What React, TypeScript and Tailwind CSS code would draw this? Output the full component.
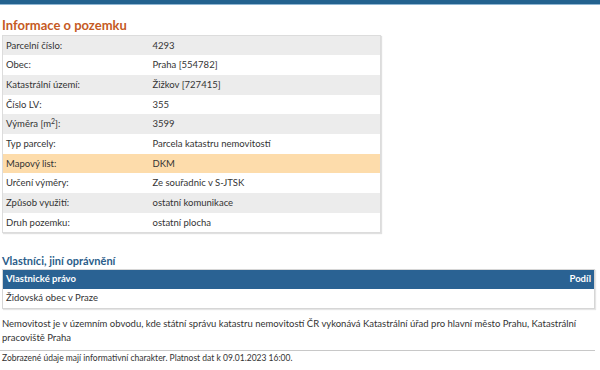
const rows: { label: React.ReactNode; value: string; hl?: boolean }[] = [
  { label: 'Parcelní číslo:', value: '4293' },
  { label: 'Obec:', value: 'Praha [554782]' },
  { label: 'Katastrální území:', value: 'Žižkov [727415]' },
  { label: 'Číslo LV:', value: '355' },
  {
    label: (
      <>
        Výměra [m<sup className="text-[7px]">2</sup>]:
      </>
    ),
    value: '3599',
  },
  { label: 'Typ parcely:', value: 'Parcela katastru nemovitostí' },
  { label: 'Mapový list:', value: 'DKM', hl: true },
  { label: 'Určení výměry:', value: 'Ze souřadnic v S-JTSK' },
  { label: 'Způsob využití:', value: 'ostatní komunikace' },
  { label: 'Druh pozemku:', value: 'ostatní plocha' },
];

export default function App() {
  return (
    <div className="w-[600px] h-[370px] bg-white text-[9.5px] text-[#333] font-['Lato',sans-serif] overflow-hidden">
      {/* top bar */}
      <div className="h-[5px] bg-[#23628f] border-b border-[#8fb6d3]" />

      <div className="px-[2px]">
        <h2 className="mt-[10px] text-[13px] leading-[20px] font-bold text-[#c55a24]">Informace o pozemku</h2>

        <table className="w-[379px] border border-[#dcdcdc] shadow-[1px_1px_1px_rgba(0,0,0,0.12)] border-collapse">
          <tbody>
            {rows.map((r, i) => (
              <tr
                key={i}
                className={r.hl ? 'bg-[#fddcab]' : i % 2 === 0 ? 'bg-[#ececec]' : 'bg-white'}
              >
                <td className="h-[19.7px] pl-[3px] w-[150px] leading-none">{r.label}</td>
                <td className="leading-none">{r.value}</td>
              </tr>
            ))}
          </tbody>
        </table>

        <h3 className="mt-[20px] text-[11px] leading-[16px] font-bold text-[#2a5d8a]">Vlastníci, jiní oprávnění</h3>

        <div className="w-[593px] border border-[#d6d6d6] shadow-[1px_1px_1px_rgba(0,0,0,0.1)]">
          <div className="h-[19px] bg-[#2a6293] text-white font-bold flex items-center justify-between px-[3px]">
            <span>Vlastnické právo</span>
            <span>Podíl</span>
          </div>
          <div className="h-[19px] flex items-center px-[3px]">Židovská obec v Praze</div>
        </div>

        <p className="mt-[8px] leading-[14px] whitespace-nowrap">
          Nemovitost je v územním obvodu, kde státní správu katastru nemovitostí ČR vykonává Katastrální úřad pro hlavní město Prahu, Katastrální
          <br />
          pracoviště Praha
        </p>
      </div>

      <div className="mt-[5px] w-[595px] border-t border-[#c8c8c8]" />
      <p className="px-[2px] mt-[1px] text-[8.5px] leading-[12px]">Zobrazené údaje mají informativní charakter. Platnost dat k 09.01.2023 16:00.</p>
    </div>
  );
}
